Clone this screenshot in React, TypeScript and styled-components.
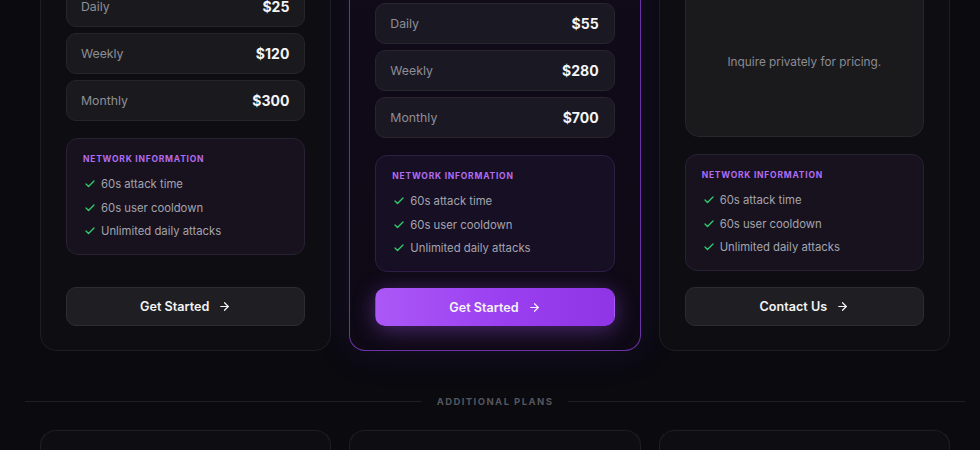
import React from 'react';
import styled, { createGlobalStyle, css } from 'styled-components';
import { ArrowRight, Check } from 'lucide-react';

const GlobalStyle = createGlobalStyle`
  html, body {
    margin: 0;
    padding: 0;
    background: #0a0a0f;
    font-family: Inter, "Noto Sans", sans-serif;
    overflow: hidden;
  }
  * { box-sizing: border-box; }
`;

type Rate = { label: string; price: string };

type Plan = {
  name: string;
  desc: string;
  rates?: Rate[];
  featured?: boolean;
  cta: string;
};

const perks = ['60s attack time', '60s user cooldown', 'Unlimited daily attacks'];

const plans: Plan[] = [
  {
    name: 'Basic',
    desc: 'Entry level access to the network.',
    rates: [
      { label: 'Daily', price: '$25' },
      { label: 'Weekly', price: '$120' },
      { label: 'Monthly', price: '$300' },
    ],
    cta: 'Get Started',
  },
  {
    name: 'Pro',
    desc: 'Our most popular package.',
    featured: true,
    rates: [
      { label: 'Daily', price: '$55' },
      { label: 'Weekly', price: '$280' },
      { label: 'Monthly', price: '$700' },
    ],
    cta: 'Get Started',
  },
  {
    name: 'Enterprise',
    desc: 'Custom capacity for large teams.',
    cta: 'Contact Us',
  },
];

const App = () => {
  return (
    <>
      <GlobalStyle />
      <Page>
        <CardGrid>
          {plans.map((plan) => (
            <Card key={plan.name} $featured={plan.featured}>
              <Header>
                {plan.featured && <Badge>Most Popular</Badge>}
                <PlanName>{plan.name}</PlanName>
                <PlanDesc>{plan.desc}</PlanDesc>
              </Header>

              {plan.rates ? (
                <Rates>
                  {plan.rates.map((r) => (
                    <RateRow key={r.label} $featured={plan.featured}>
                      <RateLabel>{r.label}</RateLabel>
                      <RatePrice>{r.price}</RatePrice>
                    </RateRow>
                  ))}
                </Rates>
              ) : (
                <Inquire>Inquire privately for pricing.</Inquire>
              )}

              <InfoBox $featured={plan.featured}>
                <InfoTitle>Network Information</InfoTitle>
                <PerkList>
                  {perks.map((p) => (
                    <Perk key={p}>
                      <Check size={12} strokeWidth={2.6} color="#2fcf6e" />
                      {p}
                    </Perk>
                  ))}
                </PerkList>
              </InfoBox>

              <ActionButton $featured={plan.featured}>
                {plan.cta}
                <ArrowRight size={13} strokeWidth={2.2} />
              </ActionButton>
            </Card>
          ))}
        </CardGrid>

        <Divider>
          <DividerText>Additional Plans</DividerText>
        </Divider>

        <CardGrid>
          <MiniCard />
          <MiniCard />
          <MiniCard />
        </CardGrid>
      </Page>
    </>
  );
};

export default App;

const Page = styled.div`
  width: 940px;
  margin: -114px 0 0 25px;
  display: flex;
  flex-direction: column;
`;

const CardGrid = styled.div`
  display: grid;
  grid-template-columns: repeat(3, 1fr);
  gap: 18px;
  padding: 0 15px;
`;

const Card = styled.div<{ $featured?: boolean }>`
  display: flex;
  flex-direction: column;
  padding: 25px 25px 24px;
  border-radius: 16px;
  border: 1px solid #1d1d22;
  background: #0e0e12;

  ${({ $featured }) =>
    $featured &&
    css`
      border-color: rgba(139, 66, 214, 0.75);
      background: linear-gradient(180deg, #110b1a 0%, #0e0915 100%);
      box-shadow: 0 0 40px rgba(124, 58, 237, 0.12);
    `}
`;

const Header = styled.div`
  display: flex;
  flex-direction: column;
  margin-bottom: 22px;
`;

const Badge = styled.span`
  align-self: flex-start;
  height: 13px;
  margin-bottom: 4px;
  font-size: 9px;
  line-height: 13px;
  color: #c084fc;
  text-transform: uppercase;
  letter-spacing: 0.1em;
`;

const PlanName = styled.h3`
  margin: 0;
  font-size: 18px;
  line-height: 26px;
  font-weight: 700;
  color: #f4f4f5;
`;

const PlanDesc = styled.p`
  margin: 6px 0 0;
  font-size: 13px;
  line-height: 20px;
  color: #8b8b94;
`;

const Rates = styled.div`
  display: flex;
  flex-direction: column;
  gap: 6px;
`;

const RateRow = styled.div<{ $featured?: boolean }>`
  display: flex;
  align-items: center;
  justify-content: space-between;
  height: 41px;
  padding: 0 15px 0 14px;
  border-radius: 10px;
  background: ${({ $featured }) => ($featured ? '#1a1822' : '#1a1a1e')};
  border: 1px solid ${({ $featured }) => ($featured ? '#28252f' : '#25252a')};
`;

const RateLabel = styled.span`
  font-size: 12.3px;
  color: #8e8e97;
`;

const RatePrice = styled.span`
  font-size: 14px;
  font-weight: 700;
  color: #f4f4f5;
`;

const Inquire = styled.div`
  height: 151px;
  display: flex;
  align-items: center;
  justify-content: center;
  border-radius: 14px;
  background: #1a1a1d;
  border: 1px solid #27272b;
  font-size: 11.8px;
  color: #8b8b93;
`;

const InfoBox = styled.div<{ $featured?: boolean }>`
  margin: 17px 0 16px;
  padding: 14px 16px 14px;
  border-radius: 12px;
  background: ${({ $featured }) => ($featured ? '#170f24' : '#17121e')};
  border: 1px solid ${({ $featured }) => ($featured ? '#2e1f44' : '#2a2035')};
`;

const InfoTitle = styled.div`
  font-size: 8.5px;
  line-height: 12px;
  font-weight: 700;
  letter-spacing: 0.09em;
  text-transform: uppercase;
  color: #b26cf2;
`;

const PerkList = styled.ul`
  list-style: none;
  margin: 10px 0 0;
  padding: 0;
  display: flex;
  flex-direction: column;
  gap: 5.5px;
`;

const Perk = styled.li`
  display: flex;
  align-items: center;
  gap: 6px;
  padding-left: 1px;
  font-size: 11.3px;
  line-height: 18px;
  color: #a4a4ad;

  svg {
    flex-shrink: 0;
    margin-right: -1px;
  }
`;

const ActionButton = styled.button<{ $featured?: boolean }>`
  margin-top: auto;
  height: 39px;
  display: flex;
  align-items: center;
  justify-content: center;
  gap: 9px;
  border-radius: 10px;
  border: 1px solid #2c2c31;
  background: #1f1f23;
  color: #f4f4f5;
  font-family: inherit;
  font-size: 12.6px;
  font-weight: 600;
  cursor: pointer;

  ${({ $featured }) =>
    $featured &&
    css`
      height: 38px;
      border-color: transparent;
      background: linear-gradient(90deg, #ab58f7 0%, #9a3ff0 55%, #8f35e6 100%);
      box-shadow: 0 4px 22px rgba(168, 85, 247, 0.4);
    `}
`;

const Divider = styled.div`
  display: flex;
  align-items: center;
  gap: 15px;
  margin-top: 42px;
  height: 16px;

  &::before,
  &::after {
    content: '';
    flex: 1;
    height: 1px;
    background: #1e1e24;
  }
`;

const DividerText = styled.span`
  font-size: 9.5px;
  font-weight: 700;
  letter-spacing: 0.15em;
  text-transform: uppercase;
  color: #56565e;
`;

const MiniCard = styled.div`
  margin-top: 20px;
  height: 200px;
  border-radius: 16px;
  border: 1px solid #1d1d22;
  border-top-color: transparent;
  background:
    linear-gradient(90deg, transparent 10%, rgba(139, 66, 214, 0.55) 50%, transparent 90%) top / 100% 1px no-repeat,
    #0e0e12;
  box-shadow: inset 0 1px 0 #1d1d22;
`;
